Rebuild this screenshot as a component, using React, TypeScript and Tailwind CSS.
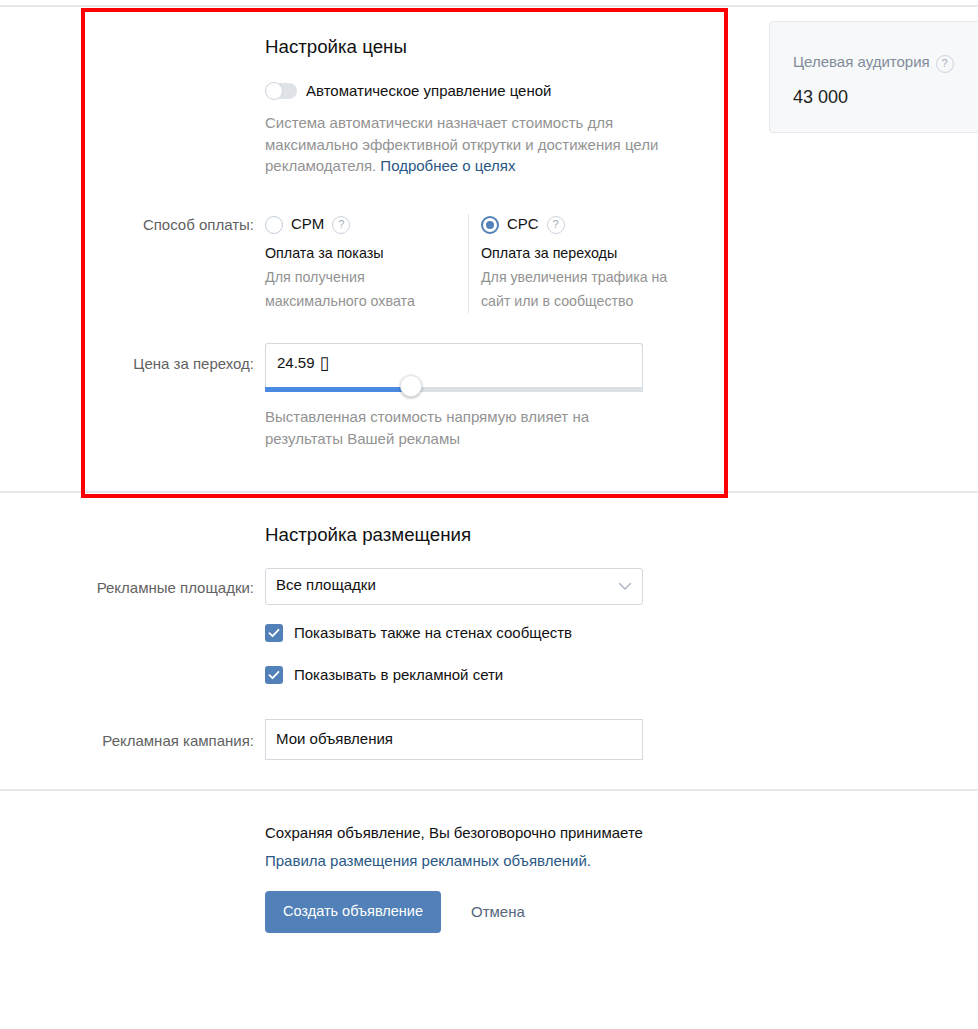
import React from "react";

const Q = () => (
  <span className="inline-flex h-[18px] w-[18px] items-center justify-center rounded-full border border-[#cdd4dc] text-[11px] leading-none text-[#a3adb8]">
    ?
  </span>
);

const Check = () => (
  <span className="flex h-[18px] w-[18px] shrink-0 items-center justify-center rounded-[3px] bg-[#5181b8]">
    <svg width="12" height="10" viewBox="0 0 12 10" fill="none">
      <path d="M1.5 5.2 4.5 8.2 10.5 1.8" stroke="white" strokeWidth="1.8" strokeLinecap="round" strokeLinejoin="round" />
    </svg>
  </span>
);

function Row({ label, children, labelClass = "" }: { label?: string; children: React.ReactNode; labelClass?: string }) {
  return (
    <div className="flex">
      <div className={`w-[254px] shrink-0 text-right text-[15px] text-[#626262] ${labelClass}`}>{label}</div>
      <div className="ml-[11px] flex-1">{children}</div>
    </div>
  );
}

export default function App() {
  return (
    <div
      className="relative h-[1029px] w-full overflow-hidden bg-white text-[15px] text-black"
      style={{ fontFamily: '"Liberation Sans", Arial, sans-serif' }}
    >
      <div className="h-[5px]" />
      <div className="h-[2px] bg-[#e7e8ec]" />

      {/* Section 1 */}
      <div className="flex h-[486px] border-b-2 border-[#e7e8ec]">
        <div className="w-[727px] shrink-0 pt-[28px]">
          <Row>
            <div className="text-[18.7px] leading-[24px] text-[#111]">Настройка цены</div>
          </Row>
          <div className="mt-[22px]">
            <Row>
              <div className="flex items-center">
                <span className="relative flex h-[16px] w-[32px] items-center rounded-full bg-[#dfe3e8]">
                  <span className="absolute left-0 h-[18px] w-[18px] rounded-full border border-[#cdd4dc] bg-white" />
                </span>
                <span className="ml-[9px] leading-[20px] text-[#111]">Автоматическое управление ценой</span>
              </div>
            </Row>
          </div>
          <div className="mt-[11px]">
            <Row>
              <div className="w-[405px] leading-[21.5px] text-[#939393]">
                Система автоматически назначает стоимость для максимально эффективной открутки и достижения цели
                рекламодателя. <span className="text-[#2a5885]">Подробнее о целях</span>
              </div>
            </Row>
          </div>
          <div className="mt-[37px]">
            <Row label="Способ оплаты:" labelClass="leading-[22px]">
              <div className="flex">
                <div className="w-[203px]">
                  <div className="flex h-[22px] items-center">
                    <span className="h-[18px] w-[18px] rounded-full border border-[#c5ced9]" />
                    <span className="ml-[8px] mr-[8px] text-[#111]">CPM</span>
                    <Q />
                  </div>
                  <div className="mt-[5px] text-[14.3px] leading-[24px] text-[#111]">Оплата за показы</div>
                  <div className="w-[170px] text-[14.3px] leading-[24px] text-[#939393]">Для получения максимального охвата</div>
                </div>
                <div className="w-px bg-[#e1e5ea]" />
                <div className="pl-[12px]">
                  <div className="flex h-[22px] items-center">
                    <span className="flex h-[18px] w-[18px] items-center justify-center rounded-full border-2 border-[#5181b8]">
                      <span className="h-[8px] w-[8px] rounded-full bg-[#5181b8]" />
                    </span>
                    <span className="ml-[8px] mr-[8px] text-[#111]">CPC</span>
                    <Q />
                  </div>
                  <div className="mt-[5px] text-[14.3px] leading-[24px] text-[#111]">Оплата за переходы</div>
                  <div className="w-[195px] text-[14.2px] leading-[24px] text-[#939393]">Для увеличения трафика на сайт или в сообщество</div>
                </div>
              </div>
            </Row>
          </div>
          <div className="mt-[30px]">
            <Row label="Цена за переход:" labelClass="pt-[10px]">
              <div className="relative w-[378px]">
                <div className="flex h-[44px] items-start rounded-t-[3px] border border-b-0 border-[#d3d9de] px-[11px] pt-[10px] text-[#111]">
                  <span className="leading-[18px]">24.59</span>
                  <span className="ml-[5px] text-[18px] leading-[18px]" style={{ fontFamily: '"DejaVu Sans", sans-serif' }}>
                    ▯
                  </span>
                </div>
                <div className="flex h-[5px]">
                  <div className="w-[146px] bg-[#4a8ae0]" />
                  <div className="flex-1 bg-[#dce1e6]" />
                </div>
                <span className="absolute left-[135px] top-[32px] h-[22px] w-[22px] rounded-full border border-[#e3e6ea] bg-white shadow-[0_1px_3px_rgba(0,0,0,0.3)]" />
                <div className="mt-[14px] w-[380px] leading-[22px] text-[#939393]">
                  Выставленная стоимость напрямую влияет на результаты Вашей рекламы
                </div>
              </div>
            </Row>
          </div>
        </div>

        <div className="ml-[42px] mt-[14px] h-[112px] w-[240px] shrink-0 rounded-[4px] border border-[#e7e8ec] bg-[#f7f8fa] pl-[23px] pt-[29px]">
          <div className="flex items-center text-[#818c99]">
            <span className="leading-[20px]">Целевая аудитория</span>
            <span className="ml-[6px]">
              <Q />
            </span>
          </div>
          <div className="mt-[11px] text-[18px] leading-[24px] text-[#222]">43 000</div>
        </div>
      </div>

      {/* Section 2 */}
      <div className="h-[298px] border-b-2 border-[#e7e8ec] pt-[30px]">
        <Row>
          <div className="text-[18.7px] leading-[24px] text-[#111]">Настройка размещения</div>
        </Row>
        <div className="mt-[21px]">
          <Row label="Рекламные площадки:" labelClass="pt-[9px]">
            <div className="flex h-[37px] w-[378px] items-center justify-between rounded-[3px] border border-[#d3d9de] pl-[10px] pr-[10px] text-[#111]">
              <span className="-mt-[2px]">Все площадки</span>
              <svg width="14" height="9" viewBox="0 0 14 9" fill="none">
                <path d="M1.5 1.5 7 7 12.5 1.5" stroke="#aeb7c2" strokeWidth="1.5" strokeLinecap="round" strokeLinejoin="round" />
              </svg>
            </div>
          </Row>
        </div>
        <div className="mt-[17px]">
          <Row>
            <div className="flex items-center">
              <Check />
              <span className="ml-[11px] text-[#111]">Показывать также на стенах сообществ</span>
            </div>
            <div className="mt-[19px] flex items-center">
              <Check />
              <span className="ml-[11px] text-[#111]">Показывать в рекламной сети</span>
            </div>
          </Row>
        </div>
        <div className="mt-[33px]">
          <Row label="Рекламная кампания:" labelClass="pt-[11px]">
            <div className="flex h-[41px] w-[378px] items-center border border-[#d3d9de] px-[10px] text-[#111]">
              Мои объявления
            </div>
          </Row>
        </div>
      </div>

      {/* Section 3 */}
      <div className="pt-[28px]">
        <Row>
          <div className="leading-[28px] text-[#111]">Сохраняя объявление, Вы безоговорочно принимаете</div>
          <div className="leading-[28px] text-[#2a5885]">Правила размещения рекламных объявлений.</div>
          <div className="mt-[16px] flex items-center">
            <button className="h-[42px] w-[176px] rounded-[4px] bg-[#5181b8] text-[14.5px] text-white">Создать объявление</button>
            <span className="ml-[30px] text-[#55677d]">Отмена</span>
          </div>
        </Row>
      </div>

      {/* annotation frame */}
      <div className="pointer-events-none absolute left-[81px] top-[8px] h-[490px] w-[647px] border-[4px] border-[#ff0000]" />
    </div>
  );
}
